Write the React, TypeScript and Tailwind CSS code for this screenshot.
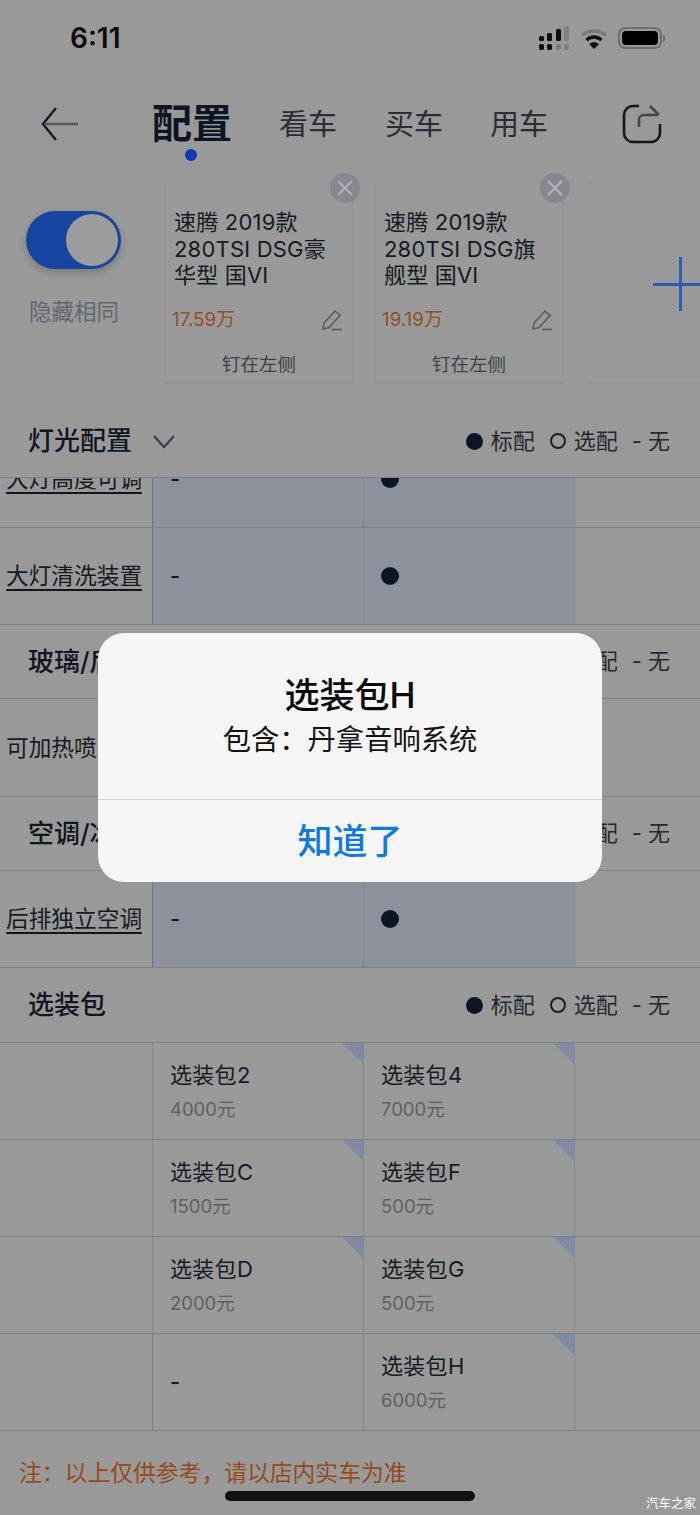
const ROW_LINE = 'border-b border-[#808187]'

function Legend() {
  return (
    <div className="ml-auto flex items-center pr-[30px] text-[22px] text-[#262930]">
      <span className="w-[17px] h-[17px] rounded-full bg-[#0e1525]" />
      <span className="ml-2">标配</span>
      <span className="ml-[15px] w-[16px] h-[16px] rounded-full border-2 border-[#1b2028]" />
      <span className="ml-2">选配</span>
      <span className="ml-[14px]">-</span>
      <span className="ml-[6px]">无</span>
    </div>
  )
}

function GroupHeader({ title, chevron, height = 'h-[74px]' }: { title: string; chevron?: boolean; height?: string }) {
  return (
    <div className={`${height} flex items-center pl-[28px] ${ROW_LINE}`}>
      <span className="text-[26px] leading-none font-medium text-[#12161f]">{title}</span>
      {chevron && (
        <svg className="ml-[20px] mt-[2px]" width="24" height="16" viewBox="0 0 24 16" fill="none" stroke="#3a3f4b" strokeWidth="2.2">
          <path d="M2 2l10 11L22 2" />
        </svg>
      )}
      <Legend />
    </div>
  )
}

function FeatureRow({ name, plain, height = 'h-[97px]' }: { name: string; plain?: boolean; height?: string }) {
  return (
    <div className={`${height} shrink-0 grid grid-cols-[152px_211px_211px_1fr] ${ROW_LINE}`}>
      <div className="flex items-center pl-[6px] overflow-hidden whitespace-nowrap">
        {plain ? (
          <span className="text-[22.7px] leading-[27px] text-[#171a22]">{name}</span>
        ) : (
          <span className="text-[22.7px] leading-[27px] text-[#171a22] border-b-2 border-[#12161f]">{name}</span>
        )}
      </div>
      <div className="flex items-center pl-[17px] bg-[#8c919c] border-l border-[#73757d] text-[22px] font-medium text-[#171a22]">-</div>
      <div className="flex items-center pl-[17px] bg-[#8c919c] border-l border-[#81848e]">
        <span className="w-[18px] h-[18px] rounded-full bg-[#0e1525]" />
      </div>
      <div className="border-l border-[#85868b]" />
    </div>
  )
}

function OptionCell({ name, price }: { name?: string; price?: string }) {
  if (!name) {
    return (
      <div className="flex items-center pl-[17px] border-l border-[#7a7b80] text-[22px] font-medium text-[#171a22]">-</div>
    )
  }
  return (
    <div className="relative flex flex-col justify-center pl-[17px] border-l border-[#85868b]">
      <span className="absolute top-0 right-0 w-[21px] h-[21px] bg-[#808aa4] [clip-path:polygon(0_0,100%_0,100%_100%)]" />
      <span className="text-[22px] tracking-[0.3px] leading-[30px] text-[#181b23]">{name}</span>
      <span className="mt-[6px] text-[18.5px] leading-[26px] text-[#5f6166]">{price}</span>
    </div>
  )
}

function OptionRow({ left, right }: { left?: [string, string]; right: [string, string] }) {
  return (
    <div className={`h-[97px] grid grid-cols-[152px_211px_211px_1fr] ${ROW_LINE}`}>
      <div />
      {left ? <OptionCell name={left[0]} price={left[1]} /> : <OptionCell />}
      <OptionCell name={right[0]} price={right[1]} />
      <div className="border-l border-[#85868b]" />
    </div>
  )
}

function CarCard({ title, price }: { title: string; price: string }) {
  return (
    <div className="relative shrink-0 w-[188px] h-[200px] flex flex-col border border-[#939396] shadow-[0_1px_2px_rgba(0,0,0,0.08)]">
      <div className="absolute -top-[11px] -right-[8px] w-[30px] h-[30px] rounded-full bg-[#87888f] flex items-center justify-center">
        <svg width="18" height="18" viewBox="0 0 18 18" stroke="#b3b4b7" strokeWidth="1.8">
          <path d="M2 2l14 14M16 2L2 16" />
        </svg>
      </div>
      <div className="pt-[25px] pl-[8px] pr-[12px] h-[115px] text-[22px] tracking-[0.2px] leading-[26.5px] text-[#161a23]">{title}</div>
      <div className="flex items-center justify-between pl-[6px] pr-[9px] h-[48px] mt-[-3px]">
        <span className="text-[18.800px] text-[#944f26]">{price}</span>
        <svg width="22" height="22" viewBox="0 0 22 22" fill="none" stroke="#595b63" strokeWidth="1.6">
          <path d="M2 20l1-6L14 2l5 4.5L8 18.5z" />
          <path d="M11 20.5h10" />
        </svg>
      </div>
      <div className="mx-[9px] mt-[3px] border-t border-[#929295] flex-1 flex items-center justify-center text-[18.5px] text-[#3f4148]">
        钉在左侧
      </div>
    </div>
  )
}

export default function App() {
  return (
    <div className="relative w-[700px] h-[1515px] overflow-hidden bg-[#999999] font-['Inter','Noto_Sans_CJK_SC',sans-serif]">
      {/* status bar */}
      <div className="h-[76px] flex items-center pl-[70px] pr-[35px]">
        <span className="text-[28px] font-semibold text-[#0c0c0c]">6:11</span>
        <div className="ml-auto flex items-center">
          <svg width="31" height="24" viewBox="0 0 31 24" fill="#0c0c0c">
            <rect x="0" y="10" width="5" height="5" rx="1.5" />
            <rect x="0" y="18" width="5" height="6" rx="1.5" />
            <rect x="8" y="7" width="5" height="8" rx="1.5" />
            <rect x="8" y="18" width="5" height="6" rx="1.5" />
            <rect x="17" y="3" width="5" height="12" rx="1.5" />
            <rect x="17" y="18" width="5" height="6" rx="1.5" fill="#7c7c7c" />
            <rect x="25" y="0" width="5" height="15" rx="1.5" fill="#808080" />
            <rect x="25" y="18" width="5" height="6" rx="1.5" fill="#808080" />
          </svg>
          <svg className="ml-[10px]" width="28" height="21" viewBox="0 0 28 21" fill="none">
            <path d="M2 7.5c7-6 17-6 24 0" stroke="#7a7a7a" strokeWidth="3.4" />
            <path d="M6.5 12c4.5-4 10.500-4 15 0" stroke="#0c0c0c" strokeWidth="3.4" />
            <path d="M14 21l-5-5c3-2.200 7-2.200 10 0z" fill="#0c0c0c" />
          </svg>
          <div className="ml-[10px] w-[44px] h-[22px] rounded-[7px] border-2 border-[#6e6e6e] p-[2px]">
            <div className="w-full h-full rounded-[4px] bg-black" />
          </div>
          <span className="ml-[1px] w-[2px] h-[7px] rounded-r bg-[#6e6e6e]" />
        </div>
      </div>

      {/* nav */}
      <div className="h-[94px] flex items-center pl-[41px] pr-[38px] pt-[2px]">
        <svg className="shrink-0" width="38" height="36" viewBox="0 0 38 36" fill="none" stroke="#171a22" strokeWidth="2.4">
          <path d="M15 2L2 18l13 16" />
          <path d="M3 18h34" stroke="#55575c" />
        </svg>
        <div className="relative ml-[73px] text-[40px] leading-none font-bold text-[#0e1524]">
          配置
          <span className="absolute left-[33px] top-[45px] w-[12px] h-[12px] rounded-full bg-[#0b3eab]" />
        </div>
        <span className="ml-[47px] mt-[2px] text-[29px] text-[#2a2d34]">看车</span>
        <span className="ml-[48px] mt-[2px] text-[29px] text-[#2a2d34]">买车</span>
        <span className="ml-[47px] mt-[2px] text-[29px] text-[#2a2d34]">用车</span>
        <svg className="ml-auto shrink-0" width="40" height="40" viewBox="0 0 40 40" fill="none" stroke="#14171f" strokeWidth="2.6">
          <path d="M17 2h-6a9 9 0 0 0-9 9v18a9 9 0 0 0 9 9h18a9 9 0 0 0 9-9v-9" />
          <path d="M17 23v-7a5 5 0 0 1 5-5h14M28 2l9 9" stroke="#45474e" />
        </svg>
      </div>

      {/* compare strip */}
      <div className="h-[235px] flex pl-[26px] pt-[13px] overflow-hidden">
        <div className="shrink-0 w-[139px] pt-[28px]">
          <div className="w-[95px] h-[58px] rounded-full bg-[#1746a0] shadow-[0_4px_8px_rgba(0,0,0,0.2)] flex items-center justify-end pr-[3px]">
            <div className="w-[52px] h-[52px] rounded-full bg-[#9c9c9d]" />
          </div>
          <div className="mt-[28px] ml-[3px] text-[22.500px] leading-[30px] text-[#63666f]">隐藏相同</div>
        </div>
        <div className="flex gap-[22px]">
          <CarCard title="速腾 2019款 280TSI DSG豪华型 国VI" price="17.59万" />
          <CarCard title="速腾 2019款 280TSI DSG旗舰型 国VI" price="19.19万" />
          <div className="relative ml-[2px] shrink-0 w-[188px] h-[200px] border border-[#949497]">
            <span className="absolute left-[91px] top-[73px] w-[3px] h-[54px] bg-[#2d5cb2]" />
            <span className="absolute left-[65px] top-[99px] w-[54px] h-[3px] bg-[#2d5cb2]" />
          </div>
        </div>
      </div>

      <GroupHeader title="灯光配置" chevron height="h-[73px]" />
      <div className="h-[50px] overflow-hidden flex flex-col justify-end">
        <FeatureRow name="大灯高度可调" />
      </div>
      <FeatureRow name="大灯清洗装置" />
      <GroupHeader title="玻璃/后视镜" />
      <FeatureRow name="可加热喷水嘴" plain height="h-[98px]" />
      <GroupHeader title="空调/冰箱" />
      <FeatureRow name="后排独立空调" />
      <GroupHeader title="选装包" height="h-[75px]" />
      <OptionRow left={['选装包2', '4000元']} right={['选装包4', '7000元']} />
      <OptionRow left={['选装包C', '1500元']} right={['选装包F', '500元']} />
      <OptionRow left={['选装包D', '2000元']} right={['选装包G', '500元']} />
      <OptionRow right={['选装包H', '6000元']} />

      <div className="pl-[19px] pt-[26px] text-[22.800px] leading-[32px] text-[#98491d]">{'注\uFF1A以上仅供参考\uFF0C请以店内实车为准'}</div>

      {/* home indicator + watermark */}
      <div className="absolute left-[225px] top-[1491px] w-[250px] h-[10px] rounded-full bg-[#111111]" />
      <div className="absolute right-[4px] top-[1495px] text-[12.500px] leading-[17px] text-white">汽车之家</div>

      {/* alert */}
      <div className="absolute left-[98px] top-[633px] w-[504px] h-[249px] rounded-[26px] bg-[#f6f6f7] flex flex-col">
        <div className="h-[167px] pt-[39px] flex flex-col items-center border-b border-[#d4d4d6]">
          <div className="text-[35px] leading-[46px] font-medium text-[#0a0a0a]">选装包H</div>
          <div className="mt-[2px] text-[28.300px] leading-[40px] text-[#141414]">{'包含\uFF1A丹拿音响系统'}</div>
        </div>
        <div className="flex-1 flex items-center justify-center text-[35px] font-medium text-[#0b7ae2]">知道了</div>
      </div>
    </div>
  )
}
